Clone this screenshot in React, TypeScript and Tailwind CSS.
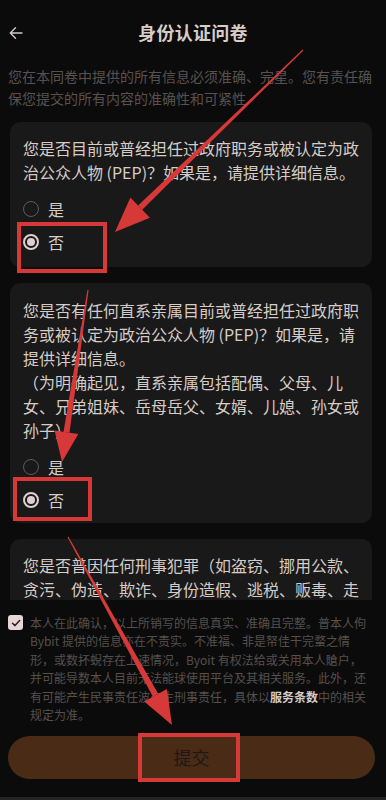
import React from "react";

const RED = "#d73838";

function arrowPoints(tx: number, ty: number, hx: number, hy: number, headLen: number, headHalf: number, tailW: number, baseW: number) {
  const dx = hx - tx;
  const dy = hy - ty;
  const len = Math.sqrt(dx * dx + dy * dy);
  const ux = dx / len;
  const uy = dy / len;
  const nx = -uy;
  const ny = ux;
  const bx = hx - ux * headLen;
  const by = hy - uy * headLen;
  const shaft = [
    [tx + nx * tailW, ty + ny * tailW],
    [bx + nx * baseW, by + ny * baseW],
    [bx - nx * baseW, by - ny * baseW],
    [tx - nx * tailW, ty - ny * tailW],
  ];
  const head = [
    [hx, hy],
    [bx + nx * headHalf, by + ny * headHalf],
    [bx - nx * headHalf, by - ny * headHalf],
  ];
  const f = (a: number[][]) => a.map((p) => `${p[0].toFixed(1)},${p[1].toFixed(1)}`).join(" ");
  return { shaft: f(shaft), head: f(head) };
}

function Arrow({ t, h, hl, hh }: { t: [number, number]; h: [number, number]; hl: number; hh: number }) {
  const p = arrowPoints(t[0], t[1], h[0], h[1], hl, hh, 0.6, 3);
  return (
    <g fill={RED}>
      <polygon points={p.shaft} />
      <polygon points={p.head} />
    </g>
  );
}

function Radio({ checked, label }: { checked?: boolean; label: string }) {
  return (
    <div className="flex items-center h-[33px] gap-[9px]">
      {checked ? (
        <div className="w-[16px] h-[16px] rounded-full border-2 border-[#ddd0cf] flex items-center justify-center">
          <div className="w-[8px] h-[8px] rounded-full bg-[#ddd0cf]" />
        </div>
      ) : (
        <div className="w-[16px] h-[16px] rounded-full border border-[#5e5a58]" />
      )}
      <span className="text-[16px] leading-none text-[#d6cdca]">{label}</span>
    </div>
  );
}

function Lines({ lines }: { lines: string[] }) {
  return (
    <div className="text-[16px] leading-[24px] text-[#d5ccc8] whitespace-nowrap">
      {lines.map((l, i) => (
        <div key={i}>{l}</div>
      ))}
    </div>
  );
}

export default function App() {
  return (
    <div
      className="relative w-[386px] h-[800px] bg-[#0c0b0b] flex flex-col overflow-hidden"
      style={{ fontFamily: '"Noto Sans CJK SC", "Noto Sans", sans-serif' }}
    >
      {/* Header */}
      <div className="h-[65px] shrink-0 relative flex items-center justify-center">
        <svg className="absolute left-[9px] top-[26px]" width="14" height="14" viewBox="0 0 14 14" fill="none">
          <path d="M13 7H1.5M6.5 1.8L1.3 7l5.2 5.2" stroke="#cfc9c6" strokeWidth="1.4" strokeLinecap="round" strokeLinejoin="round" />
        </svg>
        <span className="text-[18px] font-bold text-[#d6cdc9] tracking-[0.3px]">身份认证问卷</span>
      </div>

      {/* Scroll area */}
      <div className="h-[535px] shrink-0 overflow-hidden">
        <div className="px-[8px] text-[14px] leading-[22px] text-[#575250] whitespace-nowrap">
          <div>您在本同卷中提供的所有信息必须准确、完星。您有责任确</div>
          <div>保您提交的所有内容的准确性和可紧性</div>
        </div>

        <div className="mt-[13px] mx-[10px] w-[362px] flex flex-col gap-[16px]">
          <div className="rounded-[10px] bg-[#1a1919] pl-[13px] pr-[10px] pt-[14px] pb-[9px]">
            <Lines
              lines={["您是否目前或普经担任过政府职务或被认定为政", "治公众人物 (PEP)？如果是，请提供详细信息。"]}
            />
            <div className="mt-[8px]">
              <Radio label="是" />
              <Radio checked label="否" />
            </div>
          </div>

          <div className="rounded-[10px] bg-[#1a1919] pl-[13px] pr-[10px] pt-[15px] pb-[7px]">
            <Lines
              lines={[
                "您是否有任何直系亲属目前或普经担任过政府职",
                "务或被认定为政治公众人物 (PEP)？如果是，请",
                "提供详细信息。",
                "（为明确起见，直系亲属包括配偶、父母、儿",
                "女、兄弟姐妹、岳母岳父、女婿、儿媳、孙女或",
                "孙子）。",
              ]}
            />
            <div className="mt-[8px]">
              <Radio label="是" />
              <Radio checked label="否" />
            </div>
          </div>

          <div className="rounded-t-[10px] bg-[#1a1919] pl-[13px] pr-[10px] pt-[14px] pb-[30px]">
            <Lines lines={["您是否普因任何刑事犯罪（如盗窃、挪用公款、", "贪污、伪造、欺诈、身份造假、逃税、贩毒、走"]} />
          </div>
        </div>
      </div>

      {/* Bottom panel */}
      <div className="flex-1 flex flex-col bg-[#0c0b0b]">
        <div className="flex pt-[14px] pl-[8px] gap-[7px]">
          <div className="mt-[1px] w-[15px] h-[15px] shrink-0 rounded-[3px] bg-[#e6d6d5] flex items-center justify-center">
            <svg width="10" height="10" viewBox="0 0 10 10" fill="none">
              <path d="M1.5 5.2L4 7.6 8.6 2.6" stroke="#2a2020" strokeWidth="1.5" strokeLinecap="round" strokeLinejoin="round" />
            </svg>
          </div>
          <div className="text-[12px] leading-[18.4px] text-[#55504e] whitespace-nowrap">
            <div>本人在此确认，以上所销写的信息真实、准确且完整。普本人佝</div>
            <div>Bybit 提供的信息亦在不责实。不准福、非是帑佳干完蝥之情</div>
            <div>形，或数抔蜺存在上速情况，Byoit 有权法给或关用本人賶户，</div>
            <div>并可能导数本人目前无法能球使用平台及其相关服务。此外，还</div>
            <div>
              有可能产生民事责任波产生刑事责任，具体以<span className="font-bold text-[#d3cbc7]">服务条数</span>中的相关
            </div>
            <div>规定为准。</div>
          </div>
        </div>
        <div className="mt-[12px] ml-[8px] mr-[11px] h-[43px] rounded-full bg-[#4a2b16] flex items-center justify-center">
          <span className="text-[18px] text-[#1e1815]">提交</span>
        </div>
        <div className="flex-1" />
        <div className="h-[3px] bg-[#262424]" />
      </div>

      {/* Annotation overlay */}
      <svg className="absolute inset-0 pointer-events-none" width="386" height="800" viewBox="0 0 386 800">
        <rect x="19" y="224" width="86" height="47" fill="none" stroke={RED} strokeWidth="4" />
        <rect x="15" y="479" width="75" height="40" fill="none" stroke={RED} strokeWidth="4" />
        <rect x="140" y="735" width="98" height="45" fill="none" stroke={RED} strokeWidth="4" />
        <Arrow t={[303, 50]} h={[115, 232]} hl={35} hh={14} />
        <Arrow t={[88, 290]} h={[62, 462]} hl={30} hh={12} />
        <Arrow t={[68, 537]} h={[172, 725]} hl={34} hh={13} />
      </svg>
    </div>
  );
}
